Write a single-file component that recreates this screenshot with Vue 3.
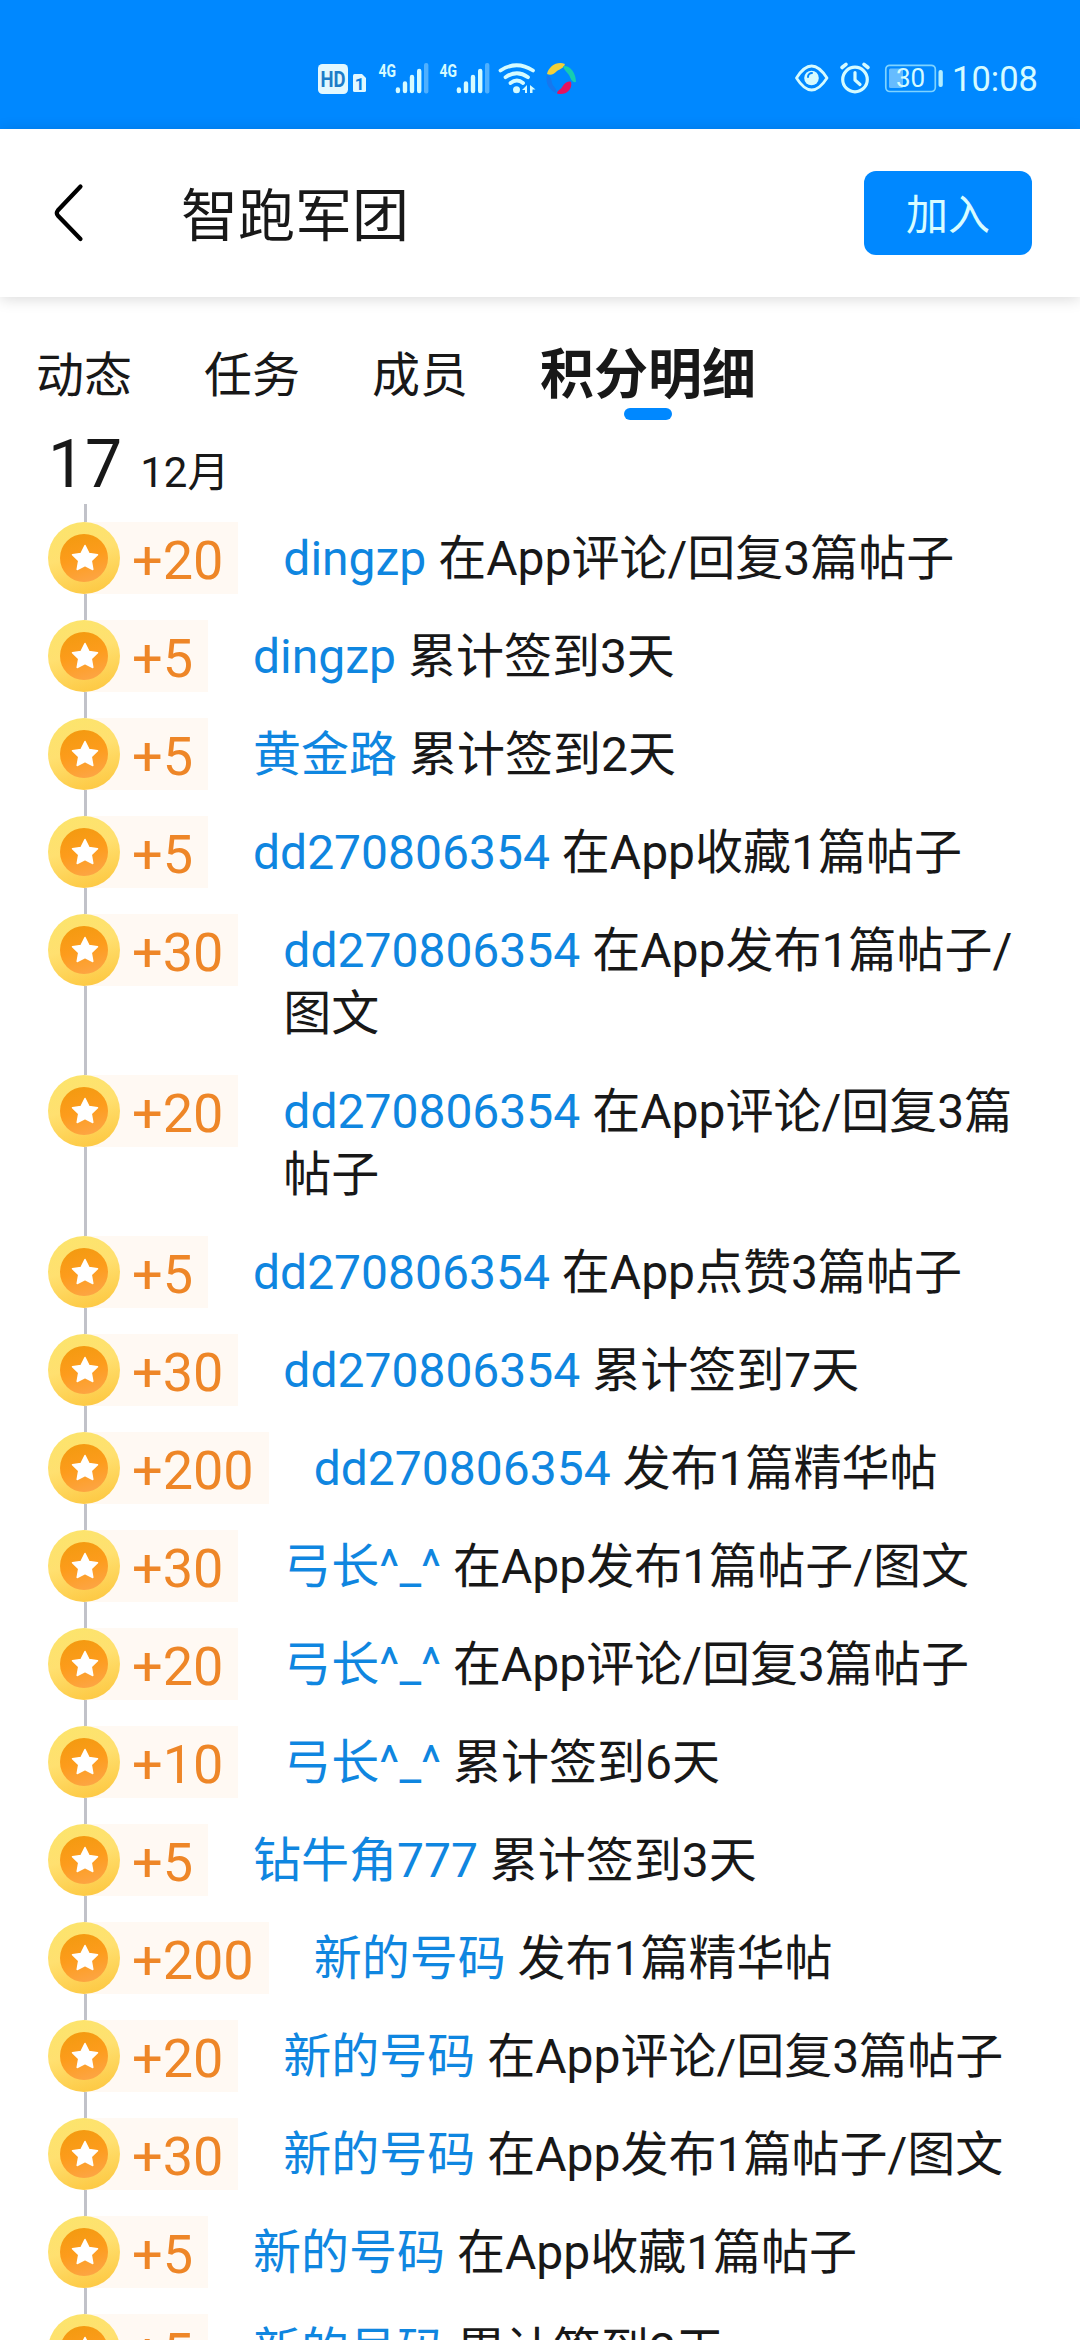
<template>
  <div class="page">
    <div class="status-bar">
      <svg class="status-icons" width="264" height="40" viewBox="316 58 264 40">
        <rect x="318" y="64" width="30" height="30" rx="4.5" fill="#e2f8ff" />
        <text class="hd" x="320.5" y="86.5" textLength="25" lengthAdjust="spacingAndGlyphs">HD</text>
        <path d="M355 74h7l4 4v12.500a1.500 1.500 0 0 1-1.500 1.500h-10a1.500 1.500 0 0 1-1.500-1.500v-15a1.500 1.500 0 0 1 1.500-1.500z" fill="#e2f8ff" />
        <text class="sim" x="354.800" y="89.500">1</text>
        <g v-for="x in [0, 61]" :key="x" :transform="`translate(${x} 0)`">
          <text class="net" x="378.500" y="76.500" textLength="17.500" lengthAdjust="spacingAndGlyphs">4G</text>
          <g stroke="#d5fbff" stroke-width="4.400" stroke-linecap="round">
            <path d="M397.900 89.500v1.500M405 83.500v7.500M412 77v14M419.200 71v20" />
          </g>
          <rect x="424" y="63" width="4.400" height="30.500" rx="2" fill="#4fb0ff" />
        </g>
        <g fill="none" stroke="#d5fbff" stroke-width="3.800" stroke-linecap="round">
          <path d="M500.500 70.500q16-10.500 32.500 0" />
          <path d="M505.500 77.200q11.500-8 22.500 0" />
          <path d="M510.500 83q6.500-5 12.500 0" />
        </g>
        <circle cx="516.500" cy="89.700" r="3.500" fill="#d5fbff" />
        <path d="M522 90l5-5v8h-2v-3zM530 85l5.500 4.500h-3v3.500h-2.500z" fill="#d5fbff" />
        <path d="M547 74c2-8 10-13 18-10c-1 4-5 5-8 7c-3 3-6 5-10 3z" fill="#f2d03a" />
        <path d="M563 66c7-1 13 7 13 16c-4 1-5-3-7-7c-2-3-5-5-6-9z" fill="#16cdb0" />
        <path d="M571 82c2 8-6 14-14 11.500c0-3 4-4 5.500-7c2-3 5-6 8.500-4.500z" fill="#e5135f" />
        <path d="M547 75c-2 8 2 15 9 18c2-4-3-6-4-10c-.5-4-1-6-5-8z" fill="#1677ee" />
      </svg>
      <div class="status-right">
        <svg width="78" height="40" viewBox="794 58 78 40">
          <g fill="none" stroke="#d5fbff">
            <path d="M796.500 78q15-24 30.500 0q-15.500 24-30.500 0z" stroke-width="2.800" stroke-linejoin="round" />
            <circle cx="855" cy="79.500" r="12.300" stroke-width="3.200" />
            <path d="M855 72.500v7.500l5 4.500" stroke-width="3.200" stroke-linecap="round" stroke-linejoin="round" />
            <path d="M842 67.500l4-3.200M868 67.500l-4-3.200" stroke-width="3.600" stroke-linecap="round" />
          </g>
          <circle cx="811.500" cy="78" r="7.300" fill="#d5fbff" />
          <path d="M808 77a4 4 0 0 1 4-4" fill="none" stroke="#0088ff" stroke-width="2" stroke-linecap="round" />
        </svg>
        <svg class="battery" width="60" height="40" viewBox="884 58 60 40">
          <rect x="885.800" y="65.300" width="49.500" height="26.200" rx="4" fill="none" stroke="#7fd3ff" stroke-width="1.700" />
          <rect x="889" y="68.500" width="14" height="19.500" rx="1.500" fill="#66bcff" />
          <rect x="938.500" y="70" width="4.300" height="17" rx="2" fill="#b5eeff" />
          <text class="level" x="896" y="87">30</text>
        </svg>
        <span class="clock">10:08</span>
      </div>
    </div>

    <div class="header">
      <svg class="back" width="32" height="60" viewBox="0 0 32 60">
        <path d="M27.500 3.500L4.800 27.500q-2 2.500 0 5L27.500 56" fill="none" stroke="#000" stroke-width="4.200" stroke-linecap="round" />
      </svg>
      <span class="title">智跑军团</span>
      <button class="join">加入</button>
    </div>

    <div class="tabs">
      <span v-for="tab in tabs" :key="tab" class="tab" :class="{ active: tab === current }" @click="current = tab">{{ tab }}</span>
    </div>

    <div class="date"><span class="day">17</span><span class="month">12月</span></div>

    <div class="list">
      <div v-for="(item, i) in records" :key="i" class="item">
        <div class="score">
          <svg class="coin" width="72" height="72" viewBox="0 0 72 72">
            <defs>
              <linearGradient id="rim" x1="0.300" y1="0" x2="0.600" y2="1">
                <stop offset="0" stop-color="#fce46c" />
                <stop offset="0.450" stop-color="#ffe070" />
                <stop offset="1" stop-color="#fdc944" />
              </linearGradient>
              <linearGradient id="face" x1="0.300" y1="0" x2="0.600" y2="1">
                <stop offset="0" stop-color="#f39a10" />
                <stop offset="0.500" stop-color="#fd9c1c" />
                <stop offset="1" stop-color="#fda544" />
              </linearGradient>
            </defs>
            <circle cx="36" cy="36" r="36" fill="url(#rim)" />
            <circle cx="36" cy="36" r="24" fill="url(#face)" />
            <path d="M37 23.500l4 8 8.500 1.300-6.200 6 1.500 8.700-7.800-4-7.800 4 1.500-8.700-6.200-6 8.500-1.300z" fill="#fff" stroke="#fff" stroke-width="1.500" stroke-linejoin="round" />
          </svg>
          <span class="num">+{{ item.score }}</span>
        </div>
        <p class="text"><span class="name">{{ item.name }}</span> {{ item.action }}</p>
      </div>
    </div>
  </div>
</template>

<script setup>
import { ref } from 'vue'

const tabs = ['动态', '任务', '成员', '积分明细']
const current = ref('积分明细')

const records = [
  { score: 20, name: 'dingzp', action: '在App评论/回复3篇帖子' },
  { score: 5, name: 'dingzp', action: '累计签到3天' },
  { score: 5, name: '黄金路', action: '累计签到2天' },
  { score: 5, name: 'dd270806354', action: '在App收藏1篇帖子' },
  { score: 30, name: 'dd270806354', action: '在App发布1篇帖子/图文' },
  { score: 20, name: 'dd270806354', action: '在App评论/回复3篇帖子' },
  { score: 5, name: 'dd270806354', action: '在App点赞3篇帖子' },
  { score: 30, name: 'dd270806354', action: '累计签到7天' },
  { score: 200, name: 'dd270806354', action: '发布1篇精华帖' },
  { score: 30, name: '弓长^_^', action: '在App发布1篇帖子/图文' },
  { score: 20, name: '弓长^_^', action: '在App评论/回复3篇帖子' },
  { score: 10, name: '弓长^_^', action: '累计签到6天' },
  { score: 5, name: '钻牛角777', action: '累计签到3天' },
  { score: 200, name: '新的号码', action: '发布1篇精华帖' },
  { score: 20, name: '新的号码', action: '在App评论/回复3篇帖子' },
  { score: 30, name: '新的号码', action: '在App发布1篇帖子/图文' },
  { score: 5, name: '新的号码', action: '在App收藏1篇帖子' },
  { score: 5, name: '新的号码', action: '累计签到2天' },
]
</script>

<style>
body {
  margin: 0;
  background: #fff;
}
</style>

<style scoped>
.page {
  width: 1080px;
  height: 2340px;
  overflow: hidden;
  background: #fff;
  color: #181818;
  font-family: Roboto, "Noto Sans CJK SC", sans-serif;
}

.status-bar {
  display: flex;
  align-items: flex-start;
  justify-content: space-between;
  box-sizing: border-box;
  height: 129px;
  padding: 58px 42px 0 316px;
  background: #0088ff;
}

.status-right {
  display: flex;
  height: 40px;
}

.battery {
  margin-left: 12px;
}

.clock {
  margin-left: 8px;
  font-size: 34.500px;
  line-height: 43px;
  color: #d5fbff;
}

.hd {
  font: bold 22px Roboto, sans-serif;
  fill: #1d7cc8;
}

.sim {
  font: bold 17px Roboto, sans-serif;
  fill: #0b7ce0;
}

.net {
  font: bold 18px Roboto, sans-serif;
  fill: #d5fbff;
}

.level {
  font: 26px Roboto, sans-serif;
  fill: #d5fbff;
}

.header {
  position: relative;
  display: flex;
  align-items: center;
  height: 168px;
  padding: 0 48px 0 53px;
  background: #fff;
  box-shadow: 0 2px 14px rgba(0, 0, 0, 0.150);
}

.title {
  flex: 1;
  margin-left: 96px;
  padding-top: 8px;
  font-size: 57px;
  line-height: 84px;
}

.join {
  width: 168px;
  height: 84px;
  padding: 0 0 3px;
  border: none;
  border-radius: 12px;
  background: #0088ff;
  color: #d8fcff;
  font-family: inherit;
  font-size: 42px;
}

.tabs {
  display: flex;
  align-items: flex-end;
  gap: 72px;
  height: 109px;
  padding: 14px 36px 0;
}

.tab {
  padding-bottom: 8px;
  font-size: 48px;
  line-height: 72px;
}

.tab.active {
  position: relative;
  font-size: 54px;
  font-weight: bold;
}

.tab.active::after {
  content: "";
  position: absolute;
  left: 84px;
  bottom: 0;
  width: 48px;
  height: 12px;
  border-radius: 6px;
  background: #0088ff;
}

.date {
  display: flex;
  align-items: baseline;
  height: 81px;
  padding: 3px 0 0 48px;
}

.day {
  margin-right: 18px;
  font-size: 66px;
  line-height: 84px;
}

.month {
  font-size: 42px;
  line-height: 60px;
}

.list {
  padding: 18px 48px 0;
  background: linear-gradient(#c1c2c9, #c1c2c9) 84px 0 / 3px 100% no-repeat;
}

.item {
  display: flex;
  align-items: flex-start;
  padding-bottom: 26px;
}

.score {
  flex: none;
  display: flex;
  align-items: center;
  height: 72px;
  margin-right: 45px;
  padding-right: 15px;
  background: linear-gradient(#fff9f3, #fff9f3) 36px 0 no-repeat;
}

.coin {
  display: block;
}

.num {
  margin-left: 12px;
  font-size: 54px;
  line-height: 72px;
  padding-top: 5px;
  color: #ee8627;
}

.text {
  margin: 0;
  padding: 5px 0 4px;
  font-size: 48px;
  line-height: 63px;
}

.name {
  color: #0f86e0;
}
</style>
